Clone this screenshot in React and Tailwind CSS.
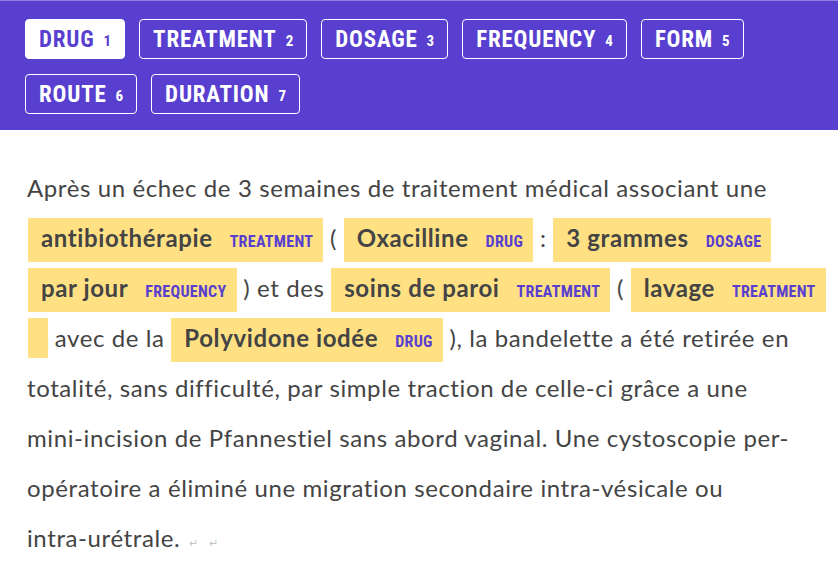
import React from "react";

const labels = [
  ["DRUG", "1", true],
  ["TREATMENT", "2"],
  ["DOSAGE", "3"],
  ["FREQUENCY", "4"],
  ["FORM", "5"],
  ["ROUTE", "6"],
  ["DURATION", "7"],
];

const cond = { fontFamily: '"Roboto Condensed", Roboto, sans-serif', fontStretch: "condensed" };

function Mark({ text, label, empty }) {
  if (empty) {
    return <span className="inline-block align-baseline bg-[#ffe184] w-[20px] leading-[40px]">&nbsp;</span>;
  }
  return (
    <span className="inline-block align-baseline bg-[#ffe184] leading-[40px] pl-[13px] pr-[10px] font-bold">
      {text}
      <span
        className="ml-[17px] text-[16px] font-bold text-[#583fcf] align-baseline tracking-[0.3px]"
        style={cond}
      >
        {label}
      </span>
    </span>
  );
}

export default function App() {
  return (
    <div className="w-[838px] h-[561px] overflow-hidden bg-white">
      <div className="bg-[#583fcf] border-t border-[#8e7fe0] pt-[18px] pb-[16px] pl-[25px] pr-[20px]">
        <div className="flex flex-wrap gap-x-[14px] gap-y-[15px] w-[740px]">
          {labels.map(([name, key, active]) => (
            <div
              key={name}
              className={
                "h-[40px] flex items-center rounded-[4px] border border-white px-[13px] " +
                (active ? "bg-white text-[#583fcf]" : "text-white")
              }
              style={cond}
            >
              <span className="text-[23px] font-bold leading-none tracking-[0.8px]">{name}</span>
              <span className="ml-[9px] text-[15px] font-bold leading-none mt-[4px]">{key}</span>
            </div>
          ))}
        </div>
      </div>
      <div
        className="pl-[27px] pt-[33px] text-[24px] tracking-[0.6px] leading-[50px] text-[#444] whitespace-nowrap"
        style={{ fontFamily: "Lato, sans-serif" }}
      >
        Après un échec de 3 semaines de traitement médical associant une
        <br />
        <span className="ml-[1px]" />
        <Mark text="antibiothérapie" label="TREATMENT" /> ({" "}
        <Mark text="Oxacilline" label="DRUG" /> :{" "}
        <Mark text="3 grammes" label="DOSAGE" />
        <br />
        <span className="ml-[1px]" />
        <Mark text="par jour" label="FREQUENCY" /> ) et des{" "}
        <Mark text="soins de paroi" label="TREATMENT" /> ({" "}
        <Mark text="lavage" label="TREATMENT" />
        <br />
        <span className="ml-[1px]" />
        <Mark empty /> avec de la{" "}
        <Mark text="Polyvidone iodée" label="DRUG" /> ), la bandelette a été retirée en
        <br />
        totalité, sans difficulté, par simple traction de celle-ci grâce a une
        <br />
        mini-incision de Pfannestiel sans abord vaginal. Une cystoscopie per-
        <br />
        opératoire a éliminé une migration secondaire intra-vésicale ou
        <br />
        intra-urétrale.{" "}
        <span className="text-[11px] text-[#c4c4c4] ml-[2px]">↵</span>
        <span className="text-[11px] text-[#c4c4c4] ml-[10px]">↵</span>
      </div>
    </div>
  );
}
